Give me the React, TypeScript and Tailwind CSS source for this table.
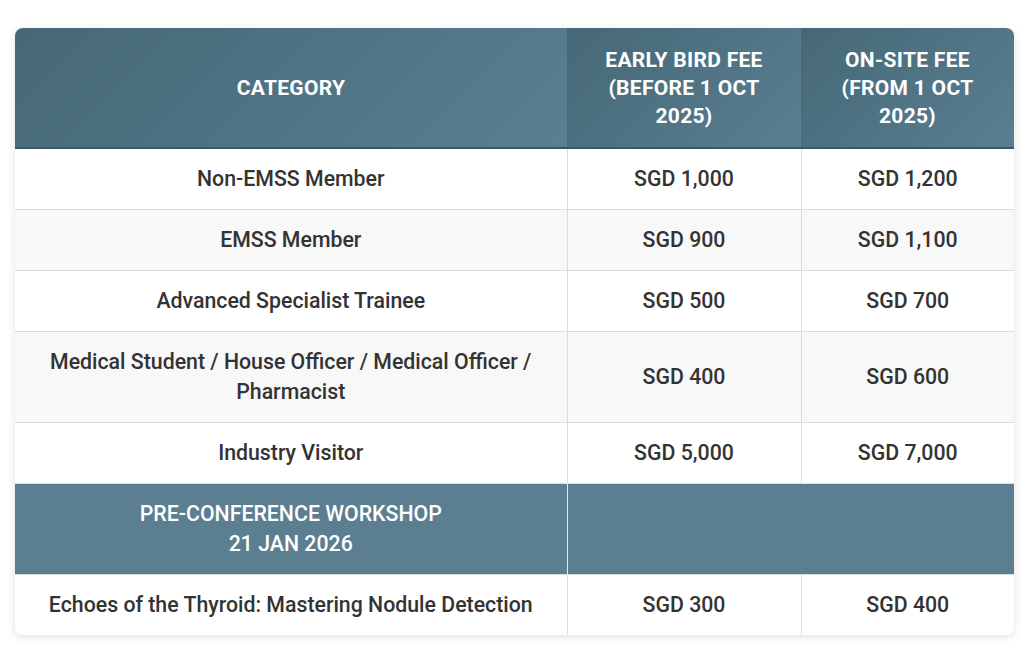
import React from "react";

const rows: [string, string, string][] = [
  ["Non-EMSS Member", "SGD 1,000", "SGD 1,200"],
  ["EMSS Member", "SGD 900", "SGD 1,100"],
  ["Advanced Specialist Trainee", "SGD 500", "SGD 700"],
  ["Medical Student / House Officer / Medical Officer / Pharmacist", "SGD 400", "SGD 600"],
  ["Industry Visitor", "SGD 5,000", "SGD 7,000"],
];

export default function App() {
  return (
    <div className="min-h-[656px] bg-white pt-[28px] px-[15px]" style={{ fontFamily: "Roboto, 'Liberation Sans', sans-serif" }}>
      <div className="w-[999px] rounded-[8px] overflow-hidden shadow-[0_2px_8px_rgba(0,0,0,0.12)] bg-white">
        <table className="w-full border-collapse table-fixed">
          <colgroup>
            <col className="w-[552px]" />
            <col className="w-[234px]" />
            <col className="w-[213px]" />
          </colgroup>
          <thead>
            <tr className="border-b-2 border-[#3d5662]">
              {["CATEGORY", "EARLY BIRD FEE (BEFORE 1 OCT 2025)", "ON-SITE FEE (FROM 1 OCT 2025)"].map((h, i) => (
                <th
                  key={i}
                  className={`h-[120px] py-[17px] ${i === 0 ? "px-6" : "px-[28px]"} text-center text-white font-bold text-[21px] leading-[28px] tracking-[0.3px] bg-[linear-gradient(135deg,#466876_0%,#5a7f92_100%)]`}
                >
                  {h}
                </th>
              ))}
            </tr>
          </thead>
          <tbody>
            {rows.map((r, idx) => (
              <tr key={idx} className={`border-b border-[#dcdcdc] ${idx % 2 === 1 ? "bg-[#f8f8f8]" : "bg-white"}`}>
                <td className="px-[30px] py-[15px] text-center text-[21.3px] leading-[30px] font-medium text-[#333] border-r border-[#dcdcdc]">{r[0]}</td>
                <td className="px-4 py-[15px] text-center text-[21.3px] leading-[30px] font-medium text-[#333] border-r border-[#dcdcdc]">{r[1]}</td>
                <td className="px-4 py-[15px] text-center text-[21.3px] leading-[30px] font-medium text-[#333]">{r[2]}</td>
              </tr>
            ))}
            <tr className="border-b border-[#dcdcdc] bg-[#5b7e91]">
              <td className="px-[30px] py-[15px] text-center text-[21.3px] leading-[30px] font-medium text-white border-r border-[#e0e6ea]">
                PRE-CONFERENCE WORKSHOP
                <br />
                21 JAN 2026
              </td>
              <td colSpan={2} className="py-[15px]"></td>
            </tr>
            <tr className="bg-white">
              <td className="px-[30px] py-[15px] text-center text-[21.3px] leading-[30px] font-medium text-[#333] border-r border-[#dcdcdc]">Echoes of the Thyroid: Mastering Nodule Detection</td>
              <td className="px-4 py-[15px] text-center text-[21.3px] leading-[30px] font-medium text-[#333] border-r border-[#dcdcdc]">SGD 300</td>
              <td className="px-4 py-[15px] text-center text-[21.3px] leading-[30px] font-medium text-[#333]">SGD 400</td>
            </tr>
          </tbody>
        </table>
      </div>
    </div>
  );
}
